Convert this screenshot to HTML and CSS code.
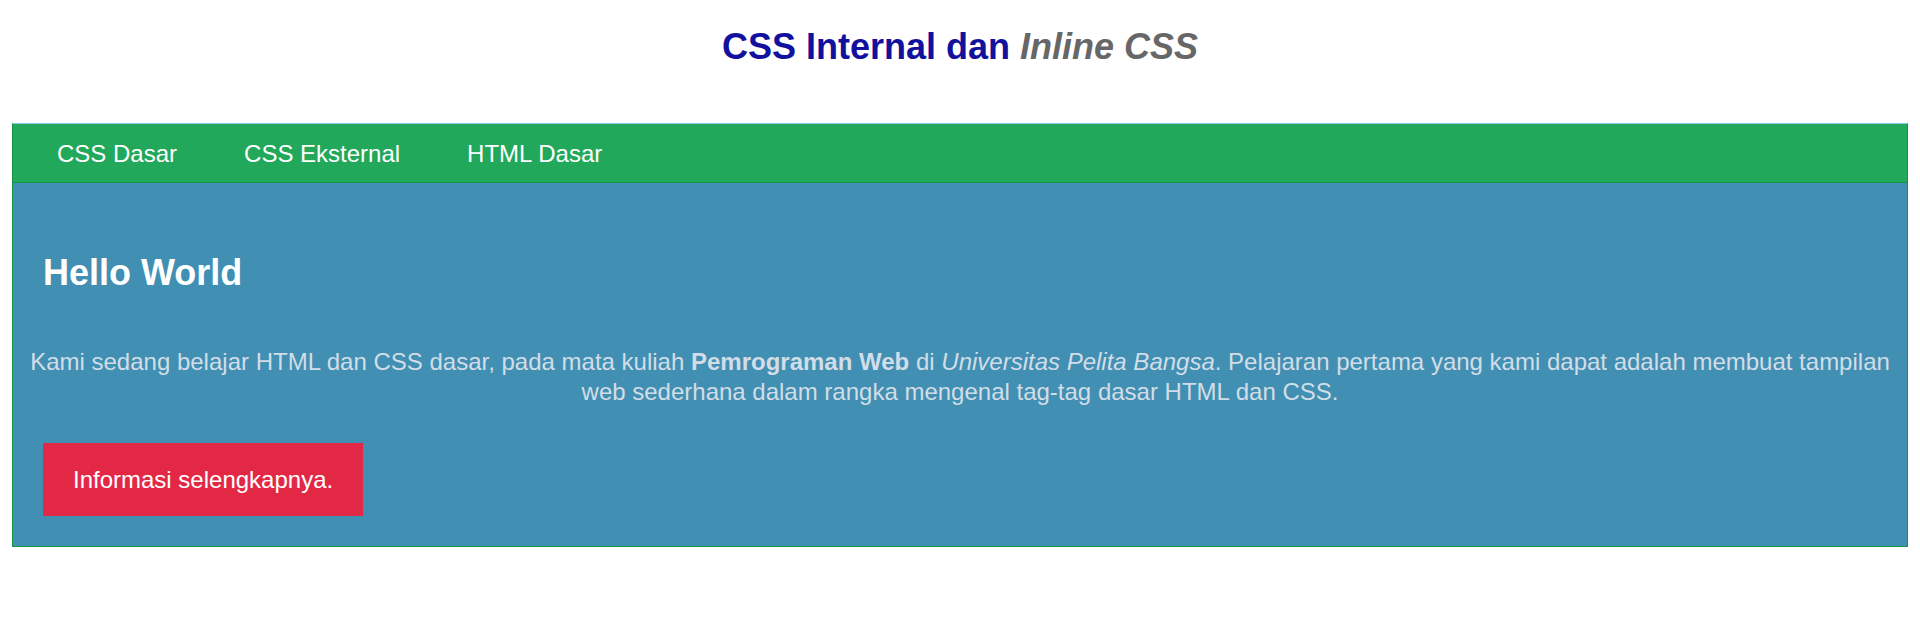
FILE: index.html
```html
<!DOCTYPE html>
<html lang="id">
<head>
<meta charset="utf-8">
<title>CSS Internal dan Inline CSS</title>
<link rel="stylesheet" href="styles.css">
</head>
<body>
<h1 class="title">CSS Internal dan <em class="title-em">Inline CSS</em></h1>
<div class="page">
  <div class="container">
    <nav class="nav">
      <a class="nav-link" href="#">CSS Dasar</a>
      <a class="nav-link" href="#">CSS Eksternal</a>
      <a class="nav-link" href="#">HTML Dasar</a>
    </nav>
    <section class="hero">
      <h2 class="hero-title">Hello World</h2>
      <p class="hero-text">Kami sedang belajar HTML dan CSS dasar, pada mata kuliah <b>Pemrograman Web</b> di <i>Universitas Pelita Bangsa</i>. Pelajaran pertama yang kami dapat adalah membuat tampilan web sederhana dalam rangka mengenal tag-tag dasar HTML dan CSS.</p>
      <a class="btn" href="#">Informasi selengkapnya.</a>
    </section>
  </div>
</div>
</body>
</html>
```
FILE: styles.css
```css
html, body {
  margin: 0;
  padding: 0;
  background: #ffffff;
}
body {
  font-family: "Liberation Sans", Arial, sans-serif;
  font-size: 24px;
}
.title {
  margin: 0;
  padding-top: 26px;
  font-size: 36px;
  font-weight: bold;
  text-align: center;
  color: #11119e;
  line-height: 41px;
}
.title-em {
  font-style: italic;
  color: #676767;
}
.page {
  padding: 56px 12px 0;
}
.container {
  border: 1px solid #169549;
  border-top-color: #8ccbe6;
}
.nav {
  display: flex;
  align-items: center;
  height: 59px;
  box-sizing: border-box;
  padding: 2px 0 0 11px;
  background: #21a85a;
  border-bottom: 1px solid #169549;
}
.nav-link {
  padding: 0 34px 0 33px;
  color: #ffffff;
  text-decoration: none;
  font-size: 24px;
}
.hero {
  background: #418fb2;
  padding: 69px 0 30px;
}
.hero-title {
  margin: 0 0 0 30px;
  font-size: 36px;
  line-height: 41px;
  color: #ffffff;
  font-weight: bold;
}
.hero-text {
  margin: 54px 0 36px;
  padding: 0 10px;
  text-align: center;
  color: #d2dde7;
  font-size: 24px;
  line-height: 30px;
}
.btn {
  display: inline-block;
  margin-left: 30px;
  padding: 23px 30px 22px;
  line-height: 28px;
  font-size: 24px;
  color: #ffffff;
  background: #e32845;
  text-decoration: none;
}
```
